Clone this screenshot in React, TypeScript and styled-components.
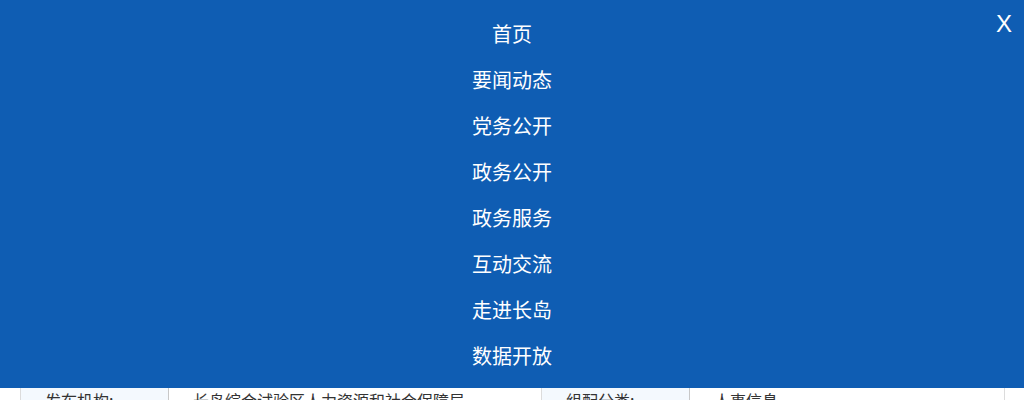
import React from "react";
import styled, { createGlobalStyle } from "styled-components";

const GlobalStyle = createGlobalStyle`
  html, body {
    margin: 0;
    padding: 0;
    background: #ffffff;
    font-family: "Noto Sans CJK SC", "Noto Sans", sans-serif;
  }
`;

const Page = styled.div`
  width: 1024px;
  height: 400px;
  overflow: hidden;
`;

const MenuPanel = styled.nav`
  position: relative;
  height: 388px;
  box-sizing: border-box;
  padding-top: 11px;
  background: #0f5db3;
`;

const MenuList = styled.ul`
  list-style: none;
  margin: 0;
  padding: 0;
  display: flex;
  flex-direction: column;
  align-items: center;
`;

const MenuItem = styled.li`
  height: 46px;
  line-height: 46px;
  font-size: 20px;
  color: #ffffff;
  cursor: pointer;
`;

const CloseButton = styled.span`
  position: absolute;
  top: 7px;
  right: 12px;
  font-family: "Liberation Sans", Arial, sans-serif;
  font-size: 24px;
  line-height: 34px;
  color: #ffffff;
  cursor: pointer;
`;

const InfoTable = styled.div`
  margin-left: 20px;
  width: 984px;
  display: grid;
  grid-template-columns: 148px 373px 148px 315px;
  border-left: 1px solid #dcdcdc;
`;

const Cell = styled.div<{ $label?: boolean }>`
  box-sizing: border-box;
  padding: 0 0 0 24px;
  height: 30px;
  font-size: 16px;
  line-height: 24px;
  color: #333333;
  white-space: nowrap;
  background: ${(p) => (p.$label ? "#f4f9fe" : "#ffffff")};
  border-right: 1px solid ${(p) => (p.$label ? "#c8c8c8" : "#dcdcdc")};
`;

const items = [
  "首页",
  "要闻动态",
  "党务公开",
  "政务公开",
  "政务服务",
  "互动交流",
  "走进长岛",
  "数据开放",
];

export default function App() {
  return (
    <Page>
      <GlobalStyle />
      <MenuPanel>
        <MenuList>
          {items.map((item) => (
            <MenuItem key={item}>{item}</MenuItem>
          ))}
        </MenuList>
        <CloseButton>X</CloseButton>
      </MenuPanel>
      <InfoTable>
        <Cell $label>发布机构:</Cell>
        <Cell>长岛综合试验区人力资源和社会保障局</Cell>
        <Cell $label>组配分类:</Cell>
        <Cell>人事信息</Cell>
      </InfoTable>
    </Page>
  );
}
